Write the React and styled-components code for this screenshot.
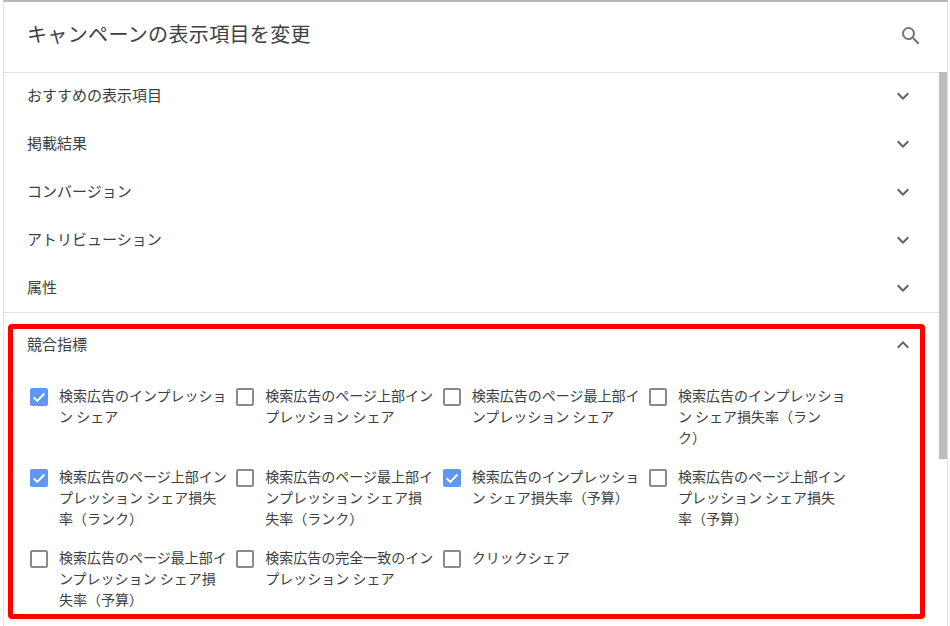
import React from "react";
import styled, { createGlobalStyle } from "styled-components";

const Global = createGlobalStyle`
  html, body { margin: 0; padding: 0; background: #fff; height: 626px; overflow: hidden; }
  * { box-sizing: border-box; }
`;

const Frame = styled.div`
  position: relative;
  margin-left: 3px;
  width: 945px;
  height: 626px;
  border-left: 1px solid #e0e0e0;
  border-right: 1px solid #e0e0e0;
  border-top: 2px solid #b8b8b8;
  overflow: hidden;
  background: #fff;
  color: #3c4043;
  font-family: "Noto Sans CJK JP", "Noto Sans", sans-serif;
  text-spacing-trim: space-all;
`;

const Header = styled.header`
  display: flex;
  align-items: center;
  justify-content: space-between;
  height: 71px;
  padding: 0 24px 2px 23px;
  border-bottom: 1px solid #e0e0e0;
`;

const Title = styled.h1`
  margin: 0;
  padding-bottom: 4px;
  font-size: 20px;
  font-weight: 400;
  line-height: 28px;
  letter-spacing: 0.35px;
`;

const Body = styled.div`
  position: relative;
  height: 553px;
`;

const Thumb = styled.div`
  position: absolute;
  top: 0;
  right: 0;
  width: 8px;
  height: 387px;
  background: #bdbdbd;
`;

const Rows = styled.div`
  margin-top: -1px;
  border-bottom: 1px solid #e0e0e0;
`;

const Row = styled.div`
  display: flex;
  align-items: center;
  justify-content: space-between;
  height: 48px;
  padding: 0 32px 0 23px;
  font-size: 15px;
`;

const RowLabel = styled.span`
  padding-bottom: 4px;
`;

const Section = styled.section`
  padding-top: 8px;
`;

const Grid = styled.div`
  display: grid;
  grid-template-columns: repeat(4, 206.33px);
  row-gap: 18px;
  padding: 16px 0 0 26px;
`;

const Item = styled.label`
  display: flex;
  align-items: flex-start;
  gap: 11px;
  font-size: 14px;
  line-height: 21px;
`;

const Box = styled.span`
  flex: none;
  display: flex;
  align-items: center;
  justify-content: center;
  width: 18px;
  height: 18px;
  margin-top: 3px;
  border-radius: 2px;
  background: ${(p) => (p.$checked ? "#5e97f6" : "#fff")};
  border: ${(p) => (p.$checked ? "none" : "2px solid #8a8a8a")};
`;

const Label = styled.span`
  width: 168px;
`;

const Highlight = styled.div`
  position: absolute;
  left: 4px;
  top: 252px;
  width: 917px;
  height: 295px;
  border: 5px solid #ff0000;
  border-radius: 4px;
  pointer-events: none;
`;

const Icon = styled.svg`
  flex: none;
  display: block;
  width: 24px;
  height: 24px;
  fill: ${(p) => p.$color || "#5f6368"};
`;

const Search = () => (
  <Icon viewBox="0 0 24 24" $color="#757575">
    <path d="M15.5 14h-.79l-.28-.27A6.47 6.47 0 0 0 16 9.5 6.5 6.5 0 1 0 9.5 16c1.61 0 3.09-.59 4.23-1.57l.27.28v.79l5 4.99L20.49 19l-4.99-5zm-6 0C7.01 14 5 11.99 5 9.5S7.01 5 9.5 5 14 7.01 14 9.5 11.99 14 9.5 14z" />
  </Icon>
);

const ChevronDown = () => (
  <Icon viewBox="0 0 24 24">
    <path d="M16.59 8.59L12 13.17 7.41 8.59 6 10l6 6 6-6z" />
  </Icon>
);

const ChevronUp = () => (
  <Icon viewBox="0 0 24 24">
    <path d="M12 8l-6 6 1.41 1.41L12 10.83l4.59 4.58L18 14z" />
  </Icon>
);

const Tick = () => (
  <svg width="18" height="18" viewBox="0 0 18 18" fill="none">
    <path d="M3.6 9.2l3.7 3.7 7.1-7.4" stroke="#fff" strokeWidth="2" />
  </svg>
);

const categories = ["おすすめの表示項目", "掲載結果", "コンバージョン", "アトリビューション", "属性"];

const metrics = [
  ["検索広告のインプレッション シェア", true],
  ["検索広告のページ上部インプレッション シェア", false],
  ["検索広告のページ最上部インプレッション シェア", false],
  ["検索広告のインプレッション シェア損失率（ランク）", false],
  ["検索広告のページ上部インプレッション シェア損失率（ランク）", true],
  ["検索広告のページ最上部インプレッション シェア損失率（ランク）", false],
  ["検索広告のインプレッション シェア損失率（予算）", true],
  ["検索広告のページ上部インプレッション シェア損失率（予算）", false],
  ["検索広告のページ最上部インプレッション シェア損失率（予算）", false],
  ["検索広告の完全一致のインプレッション シェア", false],
  ["クリックシェア", false],
];

export default function App() {
  return (
    <Frame>
      <Global />
      <Header>
        <Title>キャンペーンの表示項目を変更</Title>
        <Search />
      </Header>
      <Body>
        <Rows>
          {categories.map((c) => (
            <Row key={c}>
              <RowLabel>{c}</RowLabel>
              <ChevronDown />
            </Row>
          ))}
        </Rows>
        <Section>
          <Row>
            <RowLabel>競合指標</RowLabel>
            <ChevronUp />
          </Row>
          <Grid>
            {metrics.map(([text, checked]) => (
              <Item key={text}>
                <Box $checked={checked}>{checked && <Tick />}</Box>
                <Label>{text}</Label>
              </Item>
            ))}
          </Grid>
        </Section>
        <Thumb />
        <Highlight />
      </Body>
    </Frame>
  );
}
